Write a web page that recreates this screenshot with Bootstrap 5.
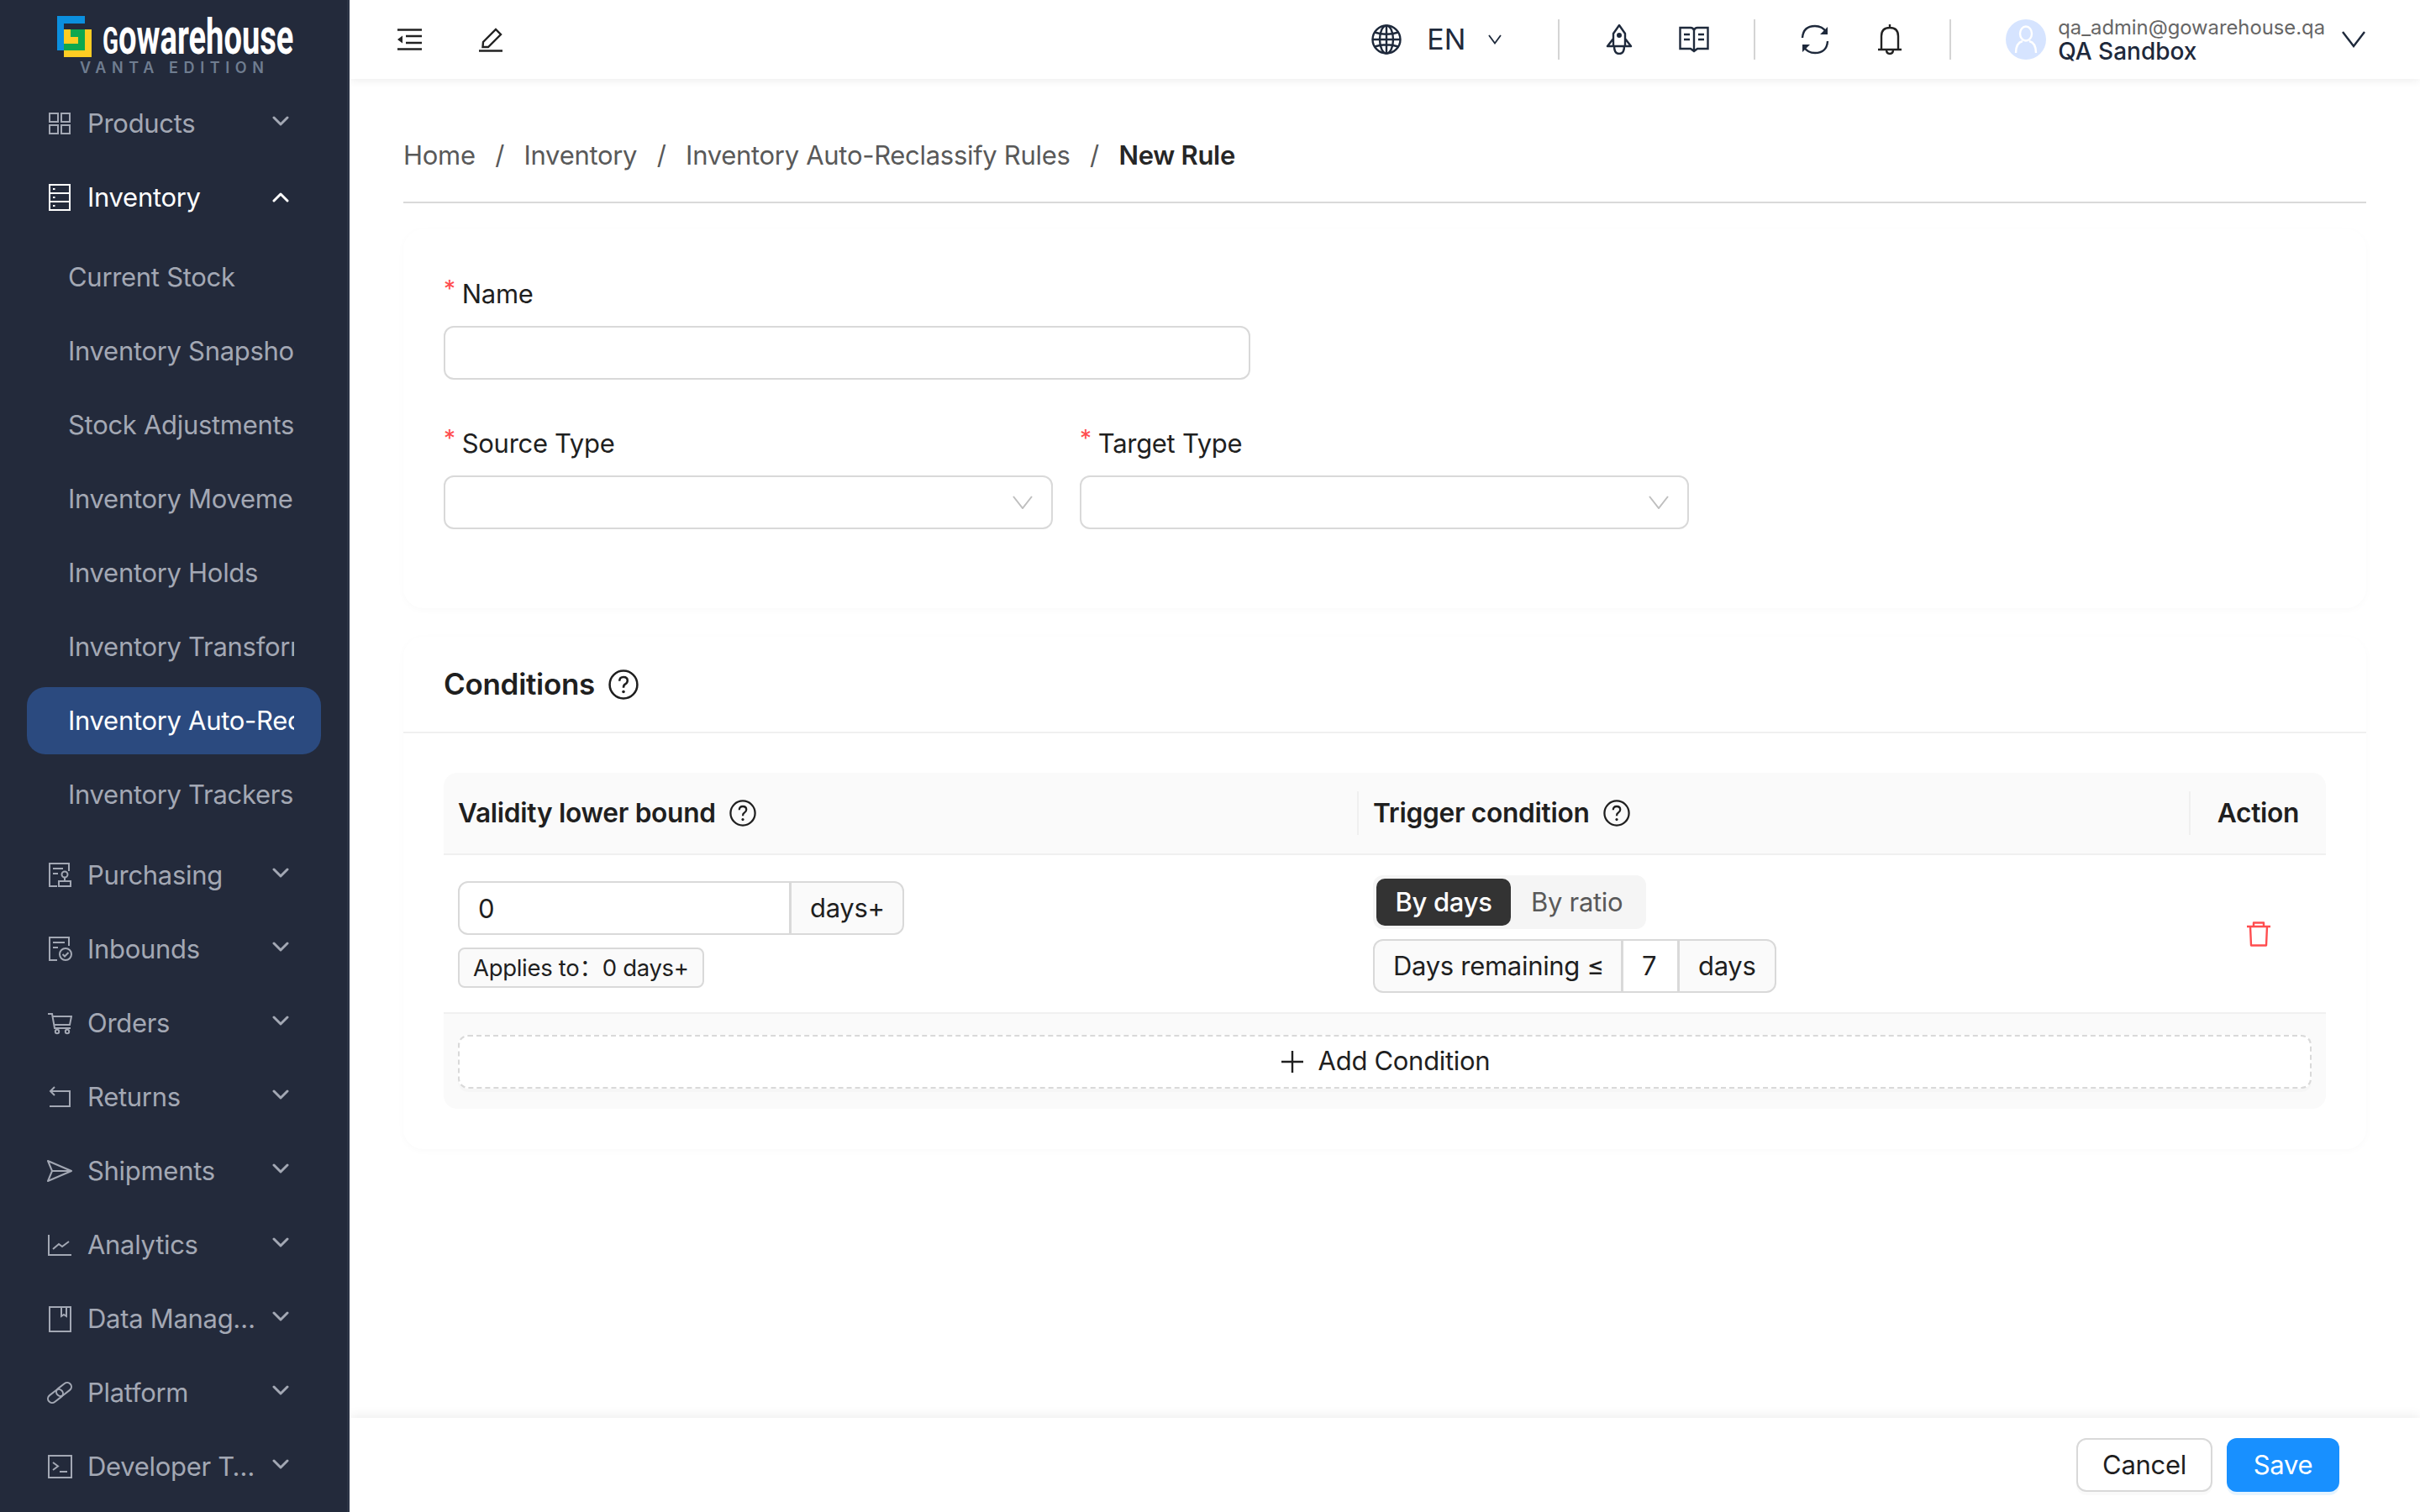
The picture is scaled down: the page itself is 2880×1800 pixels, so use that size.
<!DOCTYPE html>
<html lang="en">
<head>
    <meta charset="UTF-8">
    <title>New Rule - Gowarehouse</title>
    <link href="https://cdn.jsdelivr.net/npm/bootstrap@5.3.3/dist/css/bootstrap.min.css" rel="stylesheet">
    <style>
        html, body { height: 100%; }
        body {
            font-family: Inter, "Noto Sans CJK SC", sans-serif;
            font-size: 31px;
            letter-spacing: -.3px;
            color: #1f1f1f;
            background: #fff;
            overflow: hidden;
        }
        svg { display: block; flex-shrink: 0; }

        /* sidebar */
        .side-nav { width: 416px; background: #232a3b; color: #a3a8b4; border-right: 3px solid #2c3446; }
        .logo-box { height: 107px; padding: 19px 0 0 68px; }
        .logo-word { width: 226px; height: 50px; margin: 0 0 0 13px; color: #fff; font: 700 60px/50px Roboto, sans-serif; letter-spacing: 0; transform: scaleX(.635); transform-origin: left top; white-space: nowrap; }
        .logo-cap { font-size: 44px; }
        .logo-sub { margin: 4px 0 0 27px; color: #6f7d90; font-size: 18px; line-height: 16px; font-weight: 600; letter-spacing: 6.6px; white-space: nowrap; }
        .menu-row { height: 80px; margin: 0 32px 8px; padding: 0 0 0 24px; color: #a3a8b4; }
        .menu-row.is-open { color: #fff; }
        .menu-label { width: 202px; margin-left: 18px; overflow: hidden; white-space: nowrap; text-overflow: ellipsis; }
        .menu-caret { margin: -6px 0 0 18px; }
        .is-open .menu-caret { margin-top: 0; }
        .sub-list { margin: 7px 0 16px; }
        .sub-list .menu-row { padding-left: 49px; width: 350px; border-radius: 22px; }
        .sub-list .menu-row:last-child { margin-bottom: 0; }
        .sub-text { width: 269px; overflow: hidden; white-space: nowrap; }
        .menu-row.is-current { background: #2b4a7f; color: #fff; }

        /* top bar */
        .top-bar { height: 94px; padding: 0 65px 0 57px; background: #fff; box-shadow: 0 2px 10px rgba(0, 0, 0, .07); position: relative; z-index: 2; }
        .top-pen { margin-left: 68px; }
        .top-right { color: #1e293b; letter-spacing: 0; }
        .top-right > * { margin-left: 53px; }
        .top-right > .top-lang { margin-left: 30px; font-size: 34px; line-height: 1; }
        .top-right > .top-caret { margin-left: 27px; }
        .top-right > .top-split-first { margin-left: 67px; }
        .top-right > .top-person { margin-left: 14px; }
        .top-right > .top-avatar { margin-left: 65px; }
        .top-right > .top-usercaret { margin-left: 20px; }
        .top-split { width: 2px; height: 48px; background: #d4d4d4; }
        .top-avatar { width: 48px; height: 48px; border-radius: 50%; background: #d6e4ff; }
        .top-mail { color: #666; font-size: 23.8px; line-height: 28px; white-space: nowrap; }
        .top-org { color: #1e293b; font-size: 28px; font-weight: 500; line-height: 28px; }

        /* page */
        .page-body { padding: 0 64px; overflow: hidden; }
        .crumb-bar { height: 148px; margin: 0 0 31px; border-bottom: 2px solid #d9d9d9; padding: 72px 0 0; line-height: 38px; }
        .crumb-bar .breadcrumb { --bs-breadcrumb-divider-color: #595959; --bs-breadcrumb-item-padding-x: 23.5px; --bs-breadcrumb-margin-bottom: 0; }
        .crumb-bar .breadcrumb-item { color: #595959; }
        .crumb-bar .breadcrumb-item.active { color: #262626; font-weight: 600; }
        .crumb-bar .breadcrumb-item.active::before { font-weight: 400; }
        .panel-card { border: 0; border-radius: 24px; box-shadow: 0 2px 10px rgba(0, 0, 0, .025); margin-bottom: 34px; }
        .panel-form { padding: 47px 48px 48px; }
        .field-label { height: 60px; margin-bottom: 8px; line-height: 60px; }
        .field-star { color: #ff4d4f; font-size: 28px; margin-right: 8px; position: relative; top: -7px; }
        .field-input.form-control, .field-input.form-select { height: 64px; border: 2px solid #d9d9d9; border-radius: 12px; box-shadow: none; }
        .field-input.form-select { background-image: url("data:image/svg+xml,%3Csvg xmlns='http://www.w3.org/2000/svg' viewBox='0 0 24 16'%3E%3Cpath d='M1 1l11 14L23 1' fill='none' stroke='%23bfbfbf' stroke-width='2'/%3E%3C/svg%3E"); background-position: right 22px center; background-size: 24px 16px; }
        .name-field { width: 960px; margin-bottom: 46px; }
        .type-row { width: 1482px; gap: 32px; margin-bottom: 46px; }
        .type-field { width: 725px; }
        .panel-head { height: 115px; padding: 0 48px; border-bottom: 2px solid #f0f0f0; font-size: 35px; font-weight: 600; }
        .panel-table { padding: 47px 48px 48px; }

        /* rules table */
        .rule-table { table-layout: fixed; width: 2240px; margin: 0; --bs-table-color: #1f1f1f; }
        .rule-table .col-bound { width: 1089px; }
        .rule-table .col-trigger { width: 990px; }
        .rule-table .col-action { width: 161px; }
        .rule-table th { position: relative; height: 97px; padding: 0 17px; background: #fafafa; border-bottom: 2px solid #f0f0f0; font-size: 31.7px; font-weight: 600; vertical-align: middle; }
        .rule-table th:first-child { border-top-left-radius: 16px; }
        .rule-table th:last-child { border-top-right-radius: 16px; text-align: center; padding: 0; }
        .rule-table th:not(:last-child)::after { content: ""; position: absolute; right: 0; top: 22px; width: 2px; height: 52px; background: #f0f0f0; }
        .rule-table td { padding: 0 17px; vertical-align: middle; border-bottom: 2px solid #f0f0f0; }
        .rule-row td { height: 189px; }
        .add-cell.add-cell { height: 114px; padding: 0 17px; background: #fafafa; border: 0; border-radius: 0 0 16px 16px; }
        .add-btn.btn { width: 100%; height: 64px; gap: 16px; padding: 0; background: #fff; color: #1f1f1f; border: 2px dashed #d9d9d9; border-radius: 12px; font-size: 31px; letter-spacing: -.3px; box-shadow: 0 4px 0 rgba(0, 0, 0, .015); }

        .field-group { height: 64px; flex-wrap: nowrap; }
        .field-group .input-group-text, .field-group .form-control { height: 64px; padding: 0 22px; border: 2px solid #d9d9d9; border-radius: 12px; background: #fafafa; color: #1f1f1f; font-size: 31px; line-height: 60px; letter-spacing: -.3px; box-shadow: none; }
        .field-group .form-control { background: #fff; }
        .days-input { width: 532px; margin-top: 2px; }
        .days-input .form-control { width: 396px; flex: none; }
        .days-input .input-group-text { width: 136px; }
        .applies-tag { height: 48px; margin-top: 15px; padding: 0 16px; background: #fafafa; border: 2px solid #d9d9d9; border-radius: 8px; font-size: 27.5px; line-height: 44px; white-space: nowrap; }
        .seg-box { padding: 4px; background: #f5f5f5; border-radius: 12px; margin-bottom: 12px; }
        .seg-item { height: 56px; padding: 0 24px; border-radius: 10px; color: #595959; line-height: 56px; }
        .seg-item.is-on { width: 160px; background: #333; color: #fff; font-weight: 500; text-align: center; padding: 0; }
        .trigger-input { width: 482px; }
        .trigger-input .input-group-text:first-child { width: 297px; }
        .trigger-input .form-control { width: 68px; flex: none; padding: 0 0 0 22px; }
        .trigger-input .input-group-text:last-child { width: 117px; }

        /* footer */
        .foot-bar { height: 112px; padding: 24px 96px 0 0; gap: 17px; background: #fff; box-shadow: 0 -3px 12px rgba(0, 0, 0, .07); position: relative; z-index: 2; }
        .foot-btn.btn { height: 64px; padding: 0; border-radius: 12px; font-size: 31px; letter-spacing: -.3px; }
        .foot-cancel.btn { width: 162px; background: #fff; color: #1f1f1f; border: 2px solid #d9d9d9; box-shadow: 0 4px 0 rgba(0, 0, 0, .02); }
        .foot-save.btn { width: 134px; background: #1890ff; border: 0; color: #fff; box-shadow: 0 4px 0 #e6f4ff; }
    </style>
</head>
<body class="d-flex">

<aside class="side-nav d-flex flex-column flex-shrink-0 overflow-hidden">
    <div class="logo-box">
        <div class="d-flex align-items-start">
            <svg width="41" height="49" viewBox="0 0 41 49">
                <path d="M0 0H33V9H8V41H0Z" fill="#0b8fde"/>
                <rect x="8" y="16" width="33" height="33" fill="#fecd23"/>
                <path d="M16 16H33V41H8V33H25V25H16Z" fill="#0da84f"/>
            </svg>
            <div class="logo-word"><span class="logo-cap">G</span>owarehouse</div>
        </div>
        <div class="logo-sub">VANTA EDITION</div>
    </div>
    <nav class="d-flex flex-column">
        <div class="menu-row d-flex align-items-center">
            <svg width="30" height="32" viewBox="0 0 30 32" fill="none" stroke="currentColor" stroke-width="2"><rect x="3" y="4" width="10" height="10"/><rect x="17" y="4" width="10" height="10"/><rect x="3" y="18" width="10" height="10"/><rect x="17" y="18" width="10" height="10"/></svg>
            <span class="menu-label">Products</span>
            <svg class="menu-caret" width="20" height="12" viewBox="0 0 20 12" fill="none" stroke="currentColor" stroke-width="3" stroke-linecap="round" stroke-linejoin="round"><path d="M2 2l8 8 8-8"/></svg>
        </div>
        <div class="menu-row is-open d-flex align-items-center">
            <svg width="30" height="32" viewBox="0 0 30 32" fill="none" stroke="currentColor" stroke-width="2"><rect x="3" y="1" width="24" height="30"/><path d="M3 11H27M3 21H27M7 6H9.5M7 16H9.5M7 26H9.5"/></svg>
            <span class="menu-label">Inventory</span>
            <svg class="menu-caret" width="20" height="12" viewBox="0 0 20 12" fill="none" stroke="currentColor" stroke-width="3" stroke-linecap="round" stroke-linejoin="round"><path d="M2 10l8-8 8 8"/></svg>
        </div>
        <div class="sub-list">
            <div class="menu-row d-flex align-items-center"><div class="sub-text">Current Stock</div></div>
            <div class="menu-row d-flex align-items-center"><div class="sub-text">Inventory Snapshots</div></div>
            <div class="menu-row d-flex align-items-center"><div class="sub-text">Stock Adjustments</div></div>
            <div class="menu-row d-flex align-items-center"><div class="sub-text">Inventory Movements</div></div>
            <div class="menu-row d-flex align-items-center"><div class="sub-text">Inventory Holds</div></div>
            <div class="menu-row d-flex align-items-center"><div class="sub-text">Inventory Transforms</div></div>
            <div class="menu-row is-current d-flex align-items-center"><div class="sub-text">Inventory Auto-Reclassify Rules</div></div>
            <div class="menu-row d-flex align-items-center"><div class="sub-text">Inventory Trackers</div></div>
        </div>
        <div class="menu-row d-flex align-items-center">
            <svg width="30" height="32" viewBox="0 0 30 32" fill="none" stroke="currentColor" stroke-width="2"><path d="M26 11V2H3V29H12M7 8H19M7 14H13"/><circle cx="21" cy="15" r="3.5"/><path d="M21 19V23M14 23H28V29H14Z"/></svg>
            <span class="menu-label">Purchasing</span>
            <svg class="menu-caret" width="20" height="12" viewBox="0 0 20 12" fill="none" stroke="currentColor" stroke-width="3" stroke-linecap="round" stroke-linejoin="round"><path d="M2 2l8 8 8-8"/></svg>
        </div>
        <div class="menu-row d-flex align-items-center">
            <svg width="30" height="32" viewBox="0 0 30 32" fill="none" stroke="currentColor" stroke-width="2"><path d="M26 12V2H3V29H12M7 8H21M7 14H13"/><circle cx="22" cy="22" r="7"/><path d="M18.5 22l2.5 2.5 4.5-4.5"/></svg>
            <span class="menu-label">Inbounds</span>
            <svg class="menu-caret" width="20" height="12" viewBox="0 0 20 12" fill="none" stroke="currentColor" stroke-width="3" stroke-linecap="round" stroke-linejoin="round"><path d="M2 2l8 8 8-8"/></svg>
        </div>
        <div class="menu-row d-flex align-items-center">
            <svg width="30" height="32" viewBox="0 0 30 32" fill="none" stroke="currentColor" stroke-width="2"><path d="M1 5H6L9 22H28M7 8H29L27 18H8.5"/><circle cx="12" cy="26" r="2.2"/><circle cx="24" cy="26" r="2.2"/></svg>
            <span class="menu-label">Orders</span>
            <svg class="menu-caret" width="20" height="12" viewBox="0 0 20 12" fill="none" stroke="currentColor" stroke-width="3" stroke-linecap="round" stroke-linejoin="round"><path d="M2 2l8 8 8-8"/></svg>
        </div>
        <div class="menu-row d-flex align-items-center">
            <svg width="30" height="32" viewBox="0 0 30 32" fill="none" stroke="currentColor" stroke-width="2"><path d="M5 9H27V27H3M9 4L4 9L9 14"/></svg>
            <span class="menu-label">Returns</span>
            <svg class="menu-caret" width="20" height="12" viewBox="0 0 20 12" fill="none" stroke="currentColor" stroke-width="3" stroke-linecap="round" stroke-linejoin="round"><path d="M2 2l8 8 8-8"/></svg>
        </div>
        <div class="menu-row d-flex align-items-center">
            <svg width="30" height="32" viewBox="0 0 30 32" fill="none" stroke="currentColor" stroke-width="2" stroke-linejoin="round"><path d="M1 4L29 16L1 28L6 16ZM6 16H29"/></svg>
            <span class="menu-label">Shipments</span>
            <svg class="menu-caret" width="20" height="12" viewBox="0 0 20 12" fill="none" stroke="currentColor" stroke-width="3" stroke-linecap="round" stroke-linejoin="round"><path d="M2 2l8 8 8-8"/></svg>
        </div>
        <div class="menu-row d-flex align-items-center">
            <svg width="30" height="32" viewBox="0 0 30 32" fill="none" stroke="currentColor" stroke-width="2"><path d="M2 4V28H29M7 21L14 15L18 18L26 12"/></svg>
            <span class="menu-label">Analytics</span>
            <svg class="menu-caret" width="20" height="12" viewBox="0 0 20 12" fill="none" stroke="currentColor" stroke-width="3" stroke-linecap="round" stroke-linejoin="round"><path d="M2 2l8 8 8-8"/></svg>
        </div>
        <div class="menu-row d-flex align-items-center">
            <svg width="30" height="32" viewBox="0 0 30 32" fill="none" stroke="currentColor" stroke-width="2"><rect x="3" y="2" width="25" height="29"/><path d="M17 2V13L20 11L23 13V2"/></svg>
            <span class="menu-label">Data Management</span>
            <svg class="menu-caret" width="20" height="12" viewBox="0 0 20 12" fill="none" stroke="currentColor" stroke-width="3" stroke-linecap="round" stroke-linejoin="round"><path d="M2 2l8 8 8-8"/></svg>
        </div>
        <div class="menu-row d-flex align-items-center">
            <svg width="30" height="32" viewBox="0 0 30 32" fill="none" stroke="currentColor" stroke-width="2"><rect x="0" y="15" width="20" height="10" rx="5" transform="rotate(-38 10 20)"/><rect x="10" y="7" width="20" height="10" rx="5" transform="rotate(-38 20 12)"/></svg>
            <span class="menu-label">Platform</span>
            <svg class="menu-caret" width="20" height="12" viewBox="0 0 20 12" fill="none" stroke="currentColor" stroke-width="3" stroke-linecap="round" stroke-linejoin="round"><path d="M2 2l8 8 8-8"/></svg>
        </div>
        <div class="menu-row d-flex align-items-center">
            <svg width="30" height="32" viewBox="0 0 30 32" fill="none" stroke="currentColor" stroke-width="2"><rect x="2" y="3" width="27" height="26"/><path d="M7 11L13 15.5L7 20M15 22H24"/></svg>
            <span class="menu-label">Developer Tools</span>
            <svg class="menu-caret" width="20" height="12" viewBox="0 0 20 12" fill="none" stroke="currentColor" stroke-width="3" stroke-linecap="round" stroke-linejoin="round"><path d="M2 2l8 8 8-8"/></svg>
        </div>
    </nav>
</aside>

<div class="d-flex flex-column flex-grow-1 overflow-hidden">
    <header class="top-bar d-flex align-items-center flex-shrink-0">
        <svg width="29" height="26" viewBox="0 0 29 26" fill="none" stroke="#222" stroke-width="2.4"><path d="M0 1.5H29M10 9H29M10 17H29M0 24.5H29"/><path d="M0 13L6 8.5V17.5Z" fill="#222" stroke="none"/></svg>
        <svg class="top-pen" width="28" height="30" viewBox="0 0 28 30" fill="none" stroke="#222" stroke-width="2.4"><path d="M0 28.5H28M4.500 24L5 18L20 3L26 9L11 24Z"/></svg>
        <div class="top-right d-flex align-items-center ms-auto">
            <svg width="36" height="36" viewBox="0 0 36 36" fill="none" stroke="currentColor" stroke-width="2.4"><circle cx="18" cy="18" r="16.5"/><ellipse cx="18" cy="18" rx="8" ry="16.5"/><path d="M18 1.5V34.5M1.5 18H34.5M4 9.5Q18 14 32 9.5M4 26.5Q18 22 32 26.5"/></svg>
            <span class="top-lang">EN</span>
            <svg class="top-caret" width="16" height="12" viewBox="0 0 16 12" fill="none" stroke="currentColor" stroke-width="1.8"><path d="M1 1l7 9.5L15 1"/></svg>
            <div class="top-split top-split-first"></div>
            <svg width="36" height="36" viewBox="0 0 36 36" fill="none" stroke="currentColor" stroke-width="2.4" stroke-linejoin="round"><path d="M18 1L25 11V26H11V11ZM11 17L4 26H11M25 17L32 26H25M12 26Q12 35 18 35Q24 35 24 26"/><circle cx="18" cy="13" r="1.8" fill="currentColor"/></svg>
            <svg width="36" height="36" viewBox="0 0 36 36" fill="none" stroke="currentColor" stroke-width="2.4"><path d="M1.500 4H14Q17 4 18 7Q19 4 22 4H34.500V29H22L18 32L14 29H1.500ZM18 7V31M6 12H13M6 18H13M23 12H30M23 18H30"/></svg>
            <div class="top-split"></div>
            <svg width="36" height="38" viewBox="0 0 36 38" fill="none" stroke="currentColor" stroke-width="2.4"><path d="M3 17Q4 3 18 3Q27 3 31 10M33 21Q32 35 18 35Q9 35 5 28"/><path d="M33 4V13H24ZM3 34V25H12Z" fill="currentColor" stroke="none"/></svg>
            <svg width="36" height="38" viewBox="0 0 36 38" fill="none" stroke="#222" stroke-width="2.4"><path d="M4 31H32M8 31V15Q8 5 18 5Q28 5 28 15V31M18 1V5M14 31Q14 36 18 36Q22 36 22 31"/></svg>
            <div class="top-split"></div>
            <div class="top-avatar d-flex align-items-center justify-content-center">
                <svg width="28" height="34" viewBox="0 0 28 34" fill="none" stroke="#fff" stroke-width="2.400"><ellipse cx="14" cy="10" rx="7" ry="8.500"/><path d="M2 33Q2 21 10 19M26 33Q26 21 18 19"/></svg>
            </div>
            <div class="top-person">
                <div class="top-mail">qa_admin@gowarehouse.qa</div>
                <div class="top-org">QA Sandbox</div>
            </div>
            <svg class="top-usercaret" width="28" height="20" viewBox="0 0 28 20" fill="none" stroke="currentColor" stroke-width="2.400"><path d="M1 1l13 17L27 1"/></svg>
        </div>
    </header>

    <main class="page-body flex-grow-1">
        <nav class="crumb-bar">
            <ol class="breadcrumb">
                <li class="breadcrumb-item">Home</li>
                <li class="breadcrumb-item">Inventory</li>
                <li class="breadcrumb-item">Inventory Auto-Reclassify Rules</li>
                <li class="breadcrumb-item active">New Rule</li>
            </ol>
        </nav>

        <section class="card panel-card">
            <form class="panel-form">
                <div class="name-field">
                    <div class="field-label"><span class="field-star">*</span>Name</div>
                    <input type="text" class="form-control field-input">
                </div>
                <div class="type-row d-flex">
                    <div class="type-field">
                        <div class="field-label"><span class="field-star">*</span>Source Type</div>
                        <select class="form-select field-input"></select>
                    </div>
                    <div class="type-field">
                        <div class="field-label"><span class="field-star">*</span>Target Type</div>
                        <select class="form-select field-input"></select>
                    </div>
                </div>
            </form>
        </section>

        <section class="card panel-card">
            <div class="panel-head d-flex align-items-center gap-3">
                Conditions
                <svg width="36" height="36" viewBox="0 0 34 34" fill="none" stroke="#1f1f1f" stroke-width="2.400"><circle cx="17" cy="17" r="15.500"/><path d="M12.500 13Q12.500 8.500 17 8.500Q21.500 8.500 21.500 12.500Q21.500 15 19 16.500Q17 17.500 17 20.500"/><circle cx="17" cy="25" r="1.700" fill="#1f1f1f" stroke="none"/></svg>
            </div>
            <div class="panel-table">
                <table class="table rule-table">
                    <colgroup><col class="col-bound"><col class="col-trigger"><col class="col-action"></colgroup>
                    <thead>
                        <tr>
                            <th><span class="d-flex align-items-center gap-3">Validity lower bound <svg width="32" height="32" viewBox="0 0 34 34" fill="none" stroke="#1f1f1f" stroke-width="2.400"><circle cx="17" cy="17" r="15.500"/><path d="M12.500 13Q12.500 8.500 17 8.500Q21.500 8.500 21.500 12.500Q21.500 15 19 16.500Q17 17.500 17 20.500"/><circle cx="17" cy="25" r="1.700" fill="#1f1f1f" stroke="none"/></svg></span></th>
                            <th><span class="d-flex align-items-center gap-3">Trigger condition <svg width="32" height="32" viewBox="0 0 34 34" fill="none" stroke="#1f1f1f" stroke-width="2.400"><circle cx="17" cy="17" r="15.500"/><path d="M12.500 13Q12.500 8.500 17 8.500Q21.500 8.500 21.500 12.500Q21.500 15 19 16.500Q17 17.500 17 20.500"/><circle cx="17" cy="25" r="1.700" fill="#1f1f1f" stroke="none"/></svg></span></th>
                            <th>Action</th>
                        </tr>
                    </thead>
                    <tbody>
                        <tr class="rule-row">
                            <td>
                                <div class="input-group field-group days-input">
                                    <input type="text" class="form-control" value="0">
                                    <span class="input-group-text">days+</span>
                                </div>
                                <div class="applies-tag d-inline-block">Applies to：0 days+</div>
                            </td>
                            <td>
                                <div class="seg-box d-inline-flex">
                                    <div class="seg-item is-on">By days</div>
                                    <div class="seg-item">By ratio</div>
                                </div>
                                <div class="input-group field-group trigger-input">
                                    <span class="input-group-text">Days remaining ≤</span>
                                    <input type="text" class="form-control" value="7">
                                    <span class="input-group-text">days</span>
                                </div>
                            </td>
                            <td>
                                <svg class="mx-auto" width="28" height="30" viewBox="0 0 28 30" fill="none" stroke="#ff4d4f" stroke-width="2.400" stroke-linejoin="round"><path d="M0 6H28M4 6L5 28.500H23L24 6M8 6V1.500H20V6"/></svg>
                            </td>
                        </tr>
                        <tr>
                            <td colspan="3" class="add-cell">
                                <button type="button" class="btn add-btn d-flex align-items-center justify-content-center">
                                    <svg width="30" height="30" viewBox="0 0 30 30" fill="none" stroke="#1f1f1f" stroke-width="2.400"><path d="M15 2V28M2 15H28"/></svg>
                                    Add Condition
                                </button>
                            </td>
                        </tr>
                    </tbody>
                </table>
            </div>
        </section>
    </main>

    <footer class="foot-bar d-flex justify-content-end flex-shrink-0">
        <button type="button" class="btn foot-btn foot-cancel">Cancel</button>
        <button type="button" class="btn foot-btn foot-save">Save</button>
    </footer>
</div>

<script src="https://cdn.jsdelivr.net/npm/bootstrap@5.3.3/dist/js/bootstrap.bundle.min.js"></script>
</body>
</html>
